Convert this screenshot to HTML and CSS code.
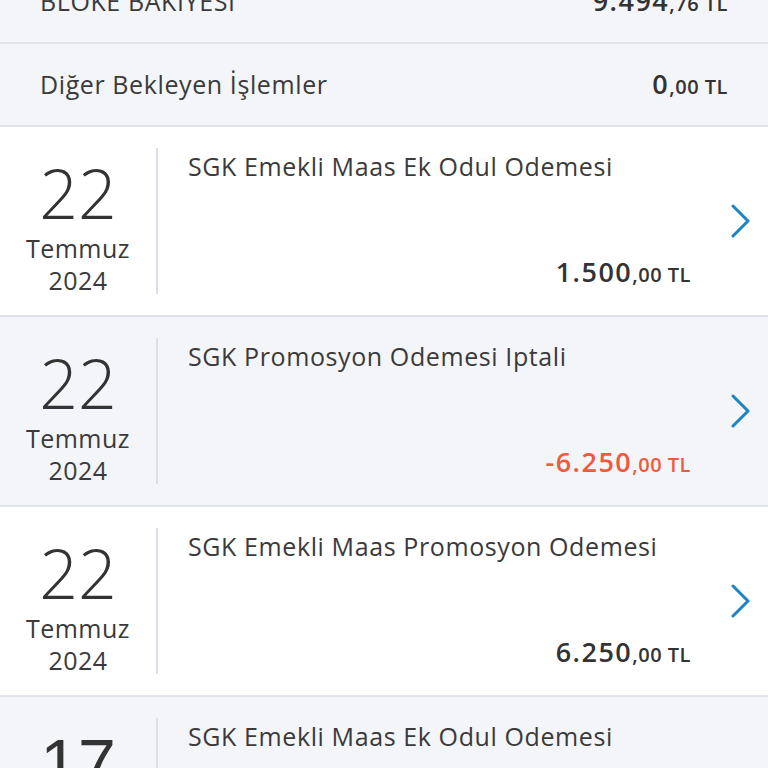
FILE: index.html
```html
<!DOCTYPE html>
<html lang="tr">
<head>
    <meta charset="UTF-8">
    <meta name="viewport" content="width=device-width, initial-scale=1.0">
    <title>Hesap Hareketleri</title>
    <link rel="stylesheet" href="styles.css">
</head>
<body>

<div class="summary">
    <div class="summary-row">
        <span class="summary-label">BLOKE BAKİYESİ</span>
        <span class="amount"><b>9.494</b>,76 TL</span>
    </div>
    <div class="summary-row">
        <span class="summary-label">Diğer Bekleyen İşlemler</span>
        <span class="amount"><b>0</b>,00 TL</span>
    </div>
</div>

<ul class="list">
    <li class="txn">
        <div class="date">
            <span class="day">22</span>
            <span class="month">Temmuz</span>
            <span class="year">2024</span>
        </div>
        <div class="info">
            <p class="title">SGK Emekli Maas Ek Odul Odemesi</p>
            <p class="amount"><b>1.500</b>,00 TL</p>
        </div>
        <div class="go">
            <svg width="20" height="34" viewBox="0 0 20 34"><path d="M2 2 L17 17 L2 32" fill="none" stroke="#1c84c6" stroke-width="3" stroke-linecap="round" stroke-linejoin="round"/></svg>
        </div>
    </li>
    <li class="txn alt">
        <div class="date">
            <span class="day">22</span>
            <span class="month">Temmuz</span>
            <span class="year">2024</span>
        </div>
        <div class="info">
            <p class="title">SGK Promosyon Odemesi Iptali</p>
            <p class="amount negative"><b>-6.250</b>,00 TL</p>
        </div>
        <div class="go">
            <svg width="20" height="34" viewBox="0 0 20 34"><path d="M2 2 L17 17 L2 32" fill="none" stroke="#1c84c6" stroke-width="3" stroke-linecap="round" stroke-linejoin="round"/></svg>
        </div>
    </li>
    <li class="txn">
        <div class="date">
            <span class="day">22</span>
            <span class="month">Temmuz</span>
            <span class="year">2024</span>
        </div>
        <div class="info">
            <p class="title">SGK Emekli Maas Promosyon Odemesi</p>
            <p class="amount"><b>6.250</b>,00 TL</p>
        </div>
        <div class="go">
            <svg width="20" height="34" viewBox="0 0 20 34"><path d="M2 2 L17 17 L2 32" fill="none" stroke="#1c84c6" stroke-width="3" stroke-linecap="round" stroke-linejoin="round"/></svg>
        </div>
    </li>
    <li class="txn alt">
        <div class="date">
            <span class="day other">17</span>
            <span class="month">Temmuz</span>
            <span class="year">2024</span>
        </div>
        <div class="info">
            <p class="title">SGK Emekli Maas Ek Odul Odemesi</p>
            <p class="amount"><b>1.500</b>,00 TL</p>
        </div>
        <div class="go">
            <svg width="20" height="34" viewBox="0 0 20 34"><path d="M2 2 L17 17 L2 32" fill="none" stroke="#1c84c6" stroke-width="3" stroke-linecap="round" stroke-linejoin="round"/></svg>
        </div>
    </li>
</ul>

</body>
</html>
```

FILE: styles.css
```css
* {
    box-sizing: border-box;
    margin: 0;
    padding: 0;
    font-family: "Open Sans", "Noto Sans", sans-serif;
}

body {
    background: #f4f5f9;
    color: #333;
    overflow: hidden;
}

.summary {
    margin-top: -39px;
}

.summary-row {
    display: flex;
    justify-content: space-between;
    align-items: center;
    height: 83px;
    padding: 0 40px 2px;
    background: #f4f5f9;
    border-bottom: 2px solid #e1e3ec;
}

.summary-label {
    font-size: 25px;
    letter-spacing: 0.6px;
    color: #3a3a3a;
}

.amount {
    font-size: 20px;
    font-weight: 600;
    letter-spacing: 0.5px;
    color: #333;
}

.amount b {
    font-size: 27px;
    font-weight: 600;
    letter-spacing: 1.5px;
}

.list {
    list-style: none;
}

.txn {
    display: flex;
    height: 190px;
    background: #fff;
    border-bottom: 2px solid #e1e3ec;
}

.txn.alt {
    background: #f4f5f9;
}

.date {
    width: 158px;
    margin: 21px 0;
    padding-top: 12px;
    border-right: 2px solid #dcdfe8;
    display: flex;
    flex-direction: column;
    align-items: center;
    color: #333;
}

.day {
    font-size: 68px;
    line-height: 66px;
    font-weight: 300;
}

.day.other {
    font-family: "Liberation Sans", Arial, sans-serif;
    font-weight: 400;
}

.month,
.year {
    font-size: 25px;
    letter-spacing: 0.5px;
    line-height: 32px;
    color: #3a3a3a;
}

.month {
    margin-top: 6px;
}

.info {
    flex: 1;
    display: flex;
    flex-direction: column;
    justify-content: space-between;
    padding: 23px 0 25px 30px;
}

.title {
    font-size: 25px;
    letter-spacing: 0.6px;
    line-height: 32px;
    color: #3a3a3a;
}

.info .amount {
    text-align: right;
    margin-right: -1px;
}

.negative {
    color: #f05a3c;
}

.go {
    width: 78px;
    display: flex;
    align-items: center;
    padding-left: 41px;
}
```
